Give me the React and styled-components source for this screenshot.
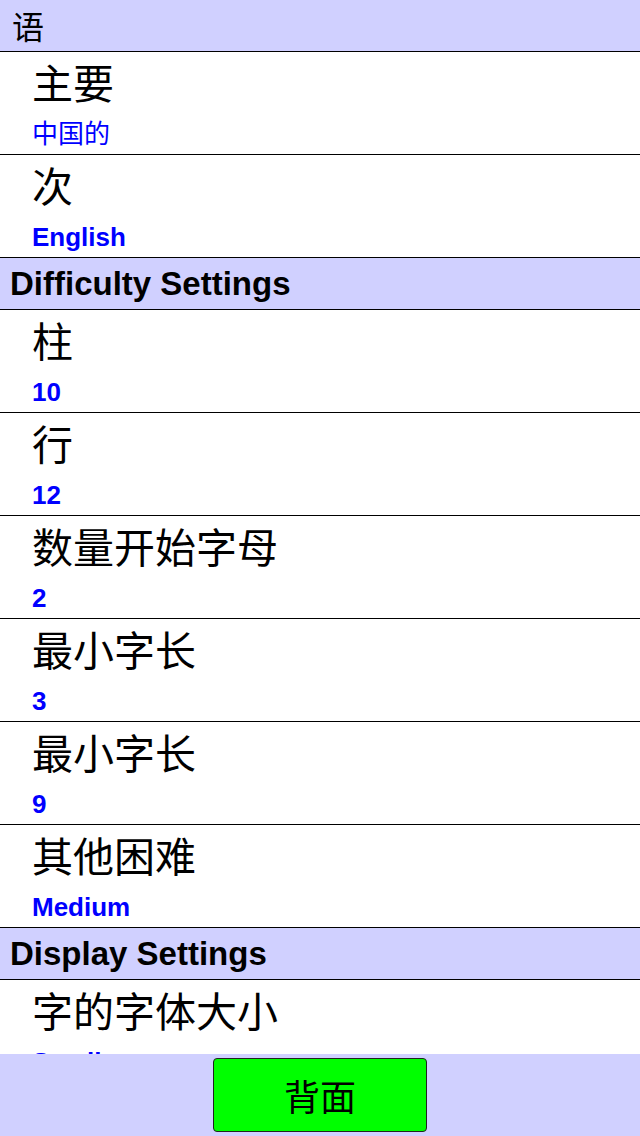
import React from "react";
import styled, { createGlobalStyle } from "styled-components";

const colors = {
  header: "#d0d0ff",
  blue: "#0000ff",
  green: "#00ff00",
  line: "#000000",
};

const GlobalStyle = createGlobalStyle`
  html, body {
    margin: 0;
    padding: 0;
    background: #ffffff;
  }
  body {
    font-family: "Liberation Sans", "Noto Sans CJK SC", sans-serif;
  }
`;

const Screen = styled.div`
  display: flex;
  flex-direction: column;
  width: 640px;
  height: 1136px;
  overflow: hidden;
`;

const List = styled.div`
  flex: 1;
  overflow: hidden;
`;

const SectionHeader = styled.div`
  height: 51px;
  line-height: 51px;
  padding-left: ${(p) => (p.$cjk ? "12px" : "10px")};
  background: ${colors.header};
  border-bottom: 1px solid ${colors.line};
  color: #000;
  font-size: ${(p) => (p.$cjk ? "32px" : "33px")};
  font-weight: ${(p) => (p.$cjk ? 400 : 700)};
  font-family: ${(p) =>
    p.$cjk
      ? '"Noto Sans CJK SC", sans-serif'
      : '"Liberation Sans", "Noto Sans CJK SC", sans-serif'};
`;

const Row = styled.div`
  box-sizing: border-box;
  height: 103px;
  padding: 11px 0 0 32px;
  border-bottom: 1px solid ${colors.line};
`;

const Title = styled.div`
  font-family: "Liberation Sans", "Noto Sans CJK SC", sans-serif;
  font-size: 41px;
  line-height: 44px;
  color: #000;
`;

const Value = styled.div`
  margin-top: 12px;
  font-size: 26px;
  line-height: 30px;
  color: ${colors.blue};
  font-weight: ${(p) => (p.$cjk ? 400 : 700)};
  white-space: nowrap;
`;

const Footer = styled.div`
  flex: 0 0 82px;
  display: flex;
  justify-content: center;
  align-items: center;
  background: ${colors.header};
`;

const BackButton = styled.button`
  box-sizing: border-box;
  width: 214px;
  height: 74px;
  background: ${colors.green};
  border: 1px solid #222;
  border-radius: 4px;
  font-family: "Noto Sans CJK SC", sans-serif;
  font-size: 36px;
  color: #000;
  padding: 0;
`;

const sections = [
  {
    title: "语",
    cjk: true,
    items: [
      { label: "主要", value: "中国的", cjk: true },
      { label: "次", value: "English" },
    ],
  },
  {
    title: "Difficulty Settings",
    items: [
      { label: "柱", value: "10" },
      { label: "行", value: "12" },
      { label: "数量开始字母", value: "2" },
      { label: "最小字长", value: "3" },
      { label: "最小字长", value: "9" },
      { label: "其他困难", value: "Medium" },
    ],
  },
  {
    title: "Display Settings",
    items: [{ label: "字的字体大小", value: "Small" }],
  },
];

const SettingRow = ({ item }) => (
  <Row>
    <Title>{item.label}</Title>
    <Value $cjk={item.cjk}>{item.value}</Value>
  </Row>
);

const App = () => {
  return (
    <>
      <GlobalStyle />
      <Screen>
        <List>
          {sections.map((s) => (
            <React.Fragment key={s.title}>
              <SectionHeader $cjk={s.cjk}>{s.title}</SectionHeader>
              {s.items.map((item, i) => (
                <SettingRow key={i} item={item} />
              ))}
            </React.Fragment>
          ))}
        </List>
        <Footer>
          <BackButton>背面</BackButton>
        </Footer>
      </Screen>
    </>
  );
};

export default App;
